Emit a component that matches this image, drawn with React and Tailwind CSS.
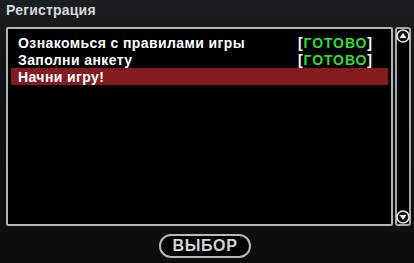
import React from 'react';

const tasks = [
    { label: 'Ознакомься с правилами игры', done: true },
    { label: 'Заполни анкету', done: true },
    { label: 'Начни игру!', done: false, active: true },
];

const ArrowButton = ({ down }) => (
    <svg width="14" height="14" viewBox="0 0 14 14" className="block">
        <circle cx="7" cy="7" r="6" fill="#111" stroke="#e6e6e6" strokeWidth="1.6" />
        {down ? (
            <polygon points="3.5,5 10.5,5 7,10" fill="#f2f2f2" />
        ) : (
            <polygon points="3.5,9 10.5,9 7,4" fill="#f2f2f2" />
        )}
    </svg>
);

const App = () => {
    return (
        <div
            className="w-[414px] h-[263px] overflow-hidden bg-[linear-gradient(180deg,#1b1f23_0%,#101315_30%,#0c0e10_100%)] flex flex-col"
            style={{ fontFamily: '"Liberation Sans", Arial, sans-serif' }}
        >
            {/* Title */}
            <div className="h-[27px] pl-[6px] pt-[1px] text-[14px] font-bold text-[#d9d9d9] leading-[18px] tracking-[0.2px]">
                Регистрация
            </div>

            {/* List + scrollbar */}
            <div className="flex pl-[6px] pr-[3px] gap-[2px]">
                <div className="w-[388px] h-[199px] bg-black border-2 border-[#b4b4b4] rounded-[2px] pt-[5px] px-[3px]">
                    {tasks.map((t) => (
                        <div
                            key={t.label}
                            className={`h-[17px] flex items-center pl-[7px] text-[14px] font-bold leading-none text-white tracking-[0.4px] ${t.active ? 'bg-[#831b1f]' : ''}`}
                        >
                            <span className="w-[280px]">{t.label}</span>
                            {t.done && (
                                <span className="tracking-[0.9px]">
                                    [<span className="text-[#2fdc2f]">ГОТОВО</span>]
                                </span>
                            )}
                        </div>
                    ))}
                </div>
                <div className="w-[16px] h-[199px] border-2 border-[#a8a8a8] rounded-[3px] bg-black flex flex-col justify-between items-center">
                    <ArrowButton />
                    <ArrowButton down />
                </div>
            </div>

            {/* Button */}
            <div className="flex justify-center pt-[8px] pr-[4px]">
                <button className="w-[92px] h-[24px] rounded-full border-2 border-[#b9b9b9] bg-black text-[#d4d4d4] text-[16px] font-bold leading-none tracking-[0.6px]">
                    ВЫБОР
                </button>
            </div>
        </div>
    );
};

export default App;
